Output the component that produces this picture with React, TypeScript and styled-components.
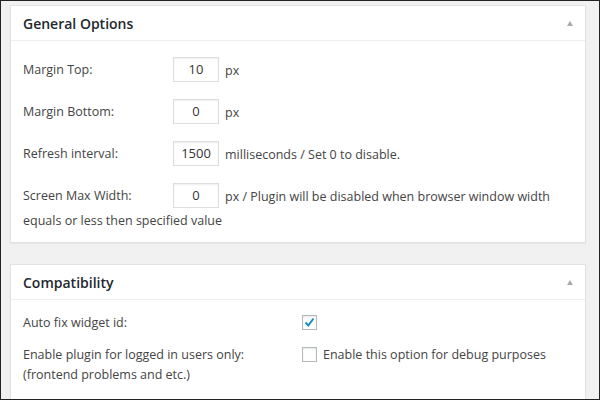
import React from 'react';
import styled, { createGlobalStyle } from 'styled-components';

const Global = createGlobalStyle`
  html, body { margin: 0; padding: 0; background: #f1f1f1; }
  body { font-family: 'Open Sans', 'Noto Sans', sans-serif; font-size: 12.5px; color: #444; }
`;

const Frame = styled.div`
  width: 600px;
  height: 400px;
  box-sizing: border-box;
  border: 1px solid #222;
  background: #f1f1f1;
  overflow: hidden;
  padding: 4px 13px 0 9px;
  display: flex;
  flex-direction: column;
  gap: 21px;
`;

const Panel = styled.div`
  background: #fff;
  border: 1px solid #e2e2e2;
  box-shadow: 0 1px 1px rgba(0, 0, 0, 0.04);
`;

const Header = styled.div`
  height: 34px;
  display: flex;
  align-items: center;
  justify-content: space-between;
  padding: 0 12px 0 12px;
  border-bottom: 1px solid #eee;
  font-size: 14px;
  font-weight: 600;
  color: #23282d;
`;

const Arrow = styled.span`
  width: 0;
  height: 0;
  border-left: 3.5px solid transparent;
  border-right: 3.5px solid transparent;
  border-bottom: 5px solid #aaa;
`;

const Body = styled.div<{ pad?: string }>`
  padding: ${({ pad }) => pad || '16px 12px 9px 12px'};
  display: flex;
  flex-direction: column;
  gap: ${({ pad }) => (pad ? '12px' : '16px')};
`;

const Row = styled.div<{ labelW: number }>`
  display: grid;
  grid-template-columns: ${({ labelW }) => labelW}px 1fr;
  align-items: start;
  line-height: 20px;
`;

const Field = styled.div`
  display: flex;
  align-items: flex-start;
  gap: 6px;
`;

const Input = styled.div`
  width: 46px;
  height: 25px;
  box-sizing: border-box;
  border: 1px solid #ddd;
  box-shadow: inset 0 1px 2px rgba(0, 0, 0, 0.07);
  text-align: center;
  line-height: 23px;
  font-size: 13px;
  color: #333;
  flex-shrink: 0;
`;

const Note = styled.span`
  padding-top: 2px;
  line-height: 24px;
`;

const Label = styled.span<{ top?: number }>`
  padding-top: ${({ top }) => top ?? 3}px;
`;

const Wrap = styled.div`
  line-height: 24px;
`;

const Box = styled.span`
  width: 15px;
  height: 15px;
  box-sizing: border-box;
  border: 1px solid #b4b9be;
  box-shadow: inset 0 1px 2px rgba(0, 0, 0, 0.1);
  display: inline-flex;
  align-items: center;
  justify-content: center;
  margin-top: 2px;
  flex-shrink: 0;
`;

const Check = () => (
  <svg width="11" height="11" viewBox="0 0 11 11">
    <path d="M1.5 5.5 L4.3 8.5 L9.5 1.5" fill="none" stroke="#1e8cbe" strokeWidth="2" />
  </svg>
);

export default function App() {
  return (
    <>
      <Global />
      <Frame>
        <Panel>
          <Header>General Options<Arrow /></Header>
          <Body>
            <Row labelW={150}>
              <Label>Margin Top:</Label>
              <Field><Input>10</Input><Note>px</Note></Field>
            </Row>
            <Row labelW={150}>
              <Label>Margin Bottom:</Label>
              <Field><Input>0</Input><Note>px</Note></Field>
            </Row>
            <Row labelW={150}>
              <Label>Refresh interval:</Label>
              <Field><Input>1500</Input><Note>milliseconds / Set 0 to disable.</Note></Field>
            </Row>
            <Wrap>
              <Row labelW={150}>
                <Label>Screen Max Width:</Label>
                <Field><Input>0</Input><Note>px / Plugin will be disabled when browser window width</Note></Field>
              </Row>
              <div>equals or less then specified value</div>
            </Wrap>
          </Body>
        </Panel>
        <Panel>
          <Header>Compatibility<Arrow /></Header>
          <Body pad="13px 12px 14px 12px">
            <Row labelW={279}>
              <Label top={0}>Auto fix widget id:</Label>
              <Field><Box><Check /></Box></Field>
            </Row>
            <Row labelW={279}>
              <Label top={0}>Enable plugin for logged in users only:<br />(frontend problems and etc.)</Label>
              <Field><Box /><span>Enable this option for debug purposes</span></Field>
            </Row>
            <Row labelW={279}>
              <Label top={0}>Enable plugin on mobile devices:</Label>
              <Field><Box /></Field>
            </Row>
          </Body>
        </Panel>
      </Frame>
    </>
  );
}
